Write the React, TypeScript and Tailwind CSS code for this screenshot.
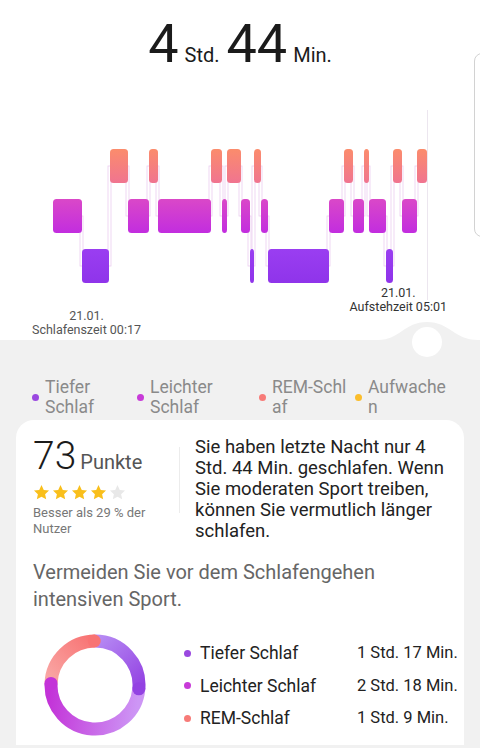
import React from "react";

type Lvl = "R" | "L" | "D";

const levelY: Record<Lvl, number> = { R: 149, L: 199, D: 249 };

// sleep phases: [start x, end x, level]
const phases: [number, number, Lvl][] = [
  [53, 82, "L"], [82, 109, "D"], [110, 128, "R"], [128, 149, "L"], [149, 158, "R"],
  [158, 211, "L"], [211, 222, "R"], [222, 227, "L"], [227, 241, "R"], [241, 250, "L"],
  [250, 254, "D"], [254, 261, "R"], [261, 268, "L"], [268, 329, "D"], [329, 344, "L"],
  [344, 353, "R"], [353, 364, "L"], [364, 369, "R"], [369, 386, "L"], [386, 393, "D"],
  [393, 402, "R"], [402, 417, "L"], [417, 427, "R"],
];

const SleepChart = () => (
  <svg width="480" height="200" viewBox="0 100 480 200" className="block">
    <defs>
      <linearGradient id="phase" gradientUnits="userSpaceOnUse" x1="0" y1="149" x2="0" y2="283">
        <stop offset="0" stopColor="#fb8c6c" />
        <stop offset="0.254" stopColor="#f07490" />
        <stop offset="0.373" stopColor="#da48c8" />
        <stop offset="0.627" stopColor="#c22ddf" />
        <stop offset="0.746" stopColor="#9a3ef1" />
        <stop offset="1" stopColor="#8f34ea" />
      </linearGradient>
    </defs>
    <line x1="427.5" y1="110" x2="427.5" y2="300" stroke="#ece6ef" strokeWidth="1" />
    {phases.slice(1).map(([x, , lvl], i) => {
      const prev = phases[i][2];
      const a = Math.min(levelY[prev], levelY[lvl]) + 17;
      const b = Math.max(levelY[prev], levelY[lvl]) + 17;
      return <rect key={"c" + i} x={x - 2} y={a} width="3" height={b - a} fill="#fff" stroke="#eccdf0" strokeWidth="0.8" />;
    })}
    {phases.map(([x1, x2, lvl], i) => (
      <rect key={i} x={x1} y={levelY[lvl]} width={x2 - x1} height="34" rx="3.5" fill="url(#phase)" />
    ))}
  </svg>
);

const Star = ({ on }: { on: boolean }) => (
  <svg width="17" height="17" viewBox="0 0 24 24">
    <path
      d="M12 1.5l3.2 6.8 7.4.9-5.5 5.1 1.5 7.3L12 17.9l-6.6 3.7 1.5-7.3-5.5-5.1 7.4-.9z"
      fill={on ? "#f9bf1b" : "#e8e8e8"}
    />
  </svg>
);

const polar = (deg: number, r = 44, cx = 51, cy = 51) => {
  const a = (deg * Math.PI) / 180;
  return [cx + r * Math.sin(a), cy - r * Math.cos(a)];
};

const arc = (from: number, to: number) => {
  const [x1, y1] = polar(from);
  const [x2, y2] = polar(to);
  const large = to - from > 180 ? 1 : 0;
  return `M ${x1} ${y1} A 44 44 0 ${large} 1 ${x2} ${y2}`;
};

const Donut = () => {
  const deepEnd = 95;
  const lightEnd = 272;
  const [dx, dy] = polar(deepEnd);
  const [lx, ly] = polar(lightEnd);
  const [rx, ry] = polar(359);
  return (
    <svg width="102" height="102" viewBox="0 0 102 102">
      <defs>
        <linearGradient id="deep" gradientUnits="userSpaceOnUse" x1="51" y1="7" x2="95" y2="55">
          <stop offset="0" stopColor="#b68af3" />
          <stop offset="1" stopColor="#9342e2" />
        </linearGradient>
        <linearGradient id="light" gradientUnits="userSpaceOnUse" x1="95" y1="60" x2="7" y2="48">
          <stop offset="0" stopColor="#cd96f5" />
          <stop offset="1" stopColor="#c333d8" />
        </linearGradient>
        <linearGradient id="rem" gradientUnits="userSpaceOnUse" x1="7" y1="50" x2="51" y2="7">
          <stop offset="0" stopColor="#f9a8a6" />
          <stop offset="1" stopColor="#f87373" />
        </linearGradient>
      </defs>
      <path d={arc(0, deepEnd)} fill="none" stroke="url(#deep)" strokeWidth="13" />
      <path d={arc(deepEnd, lightEnd)} fill="none" stroke="url(#light)" strokeWidth="13" />
      <path d={arc(lightEnd, 360)} fill="none" stroke="url(#rem)" strokeWidth="13" />
      <circle cx={dx} cy={dy} r="6.5" fill="#9342e2" />
      <circle cx={lx} cy={ly} r="6.5" fill="#c333d8" />
      <circle cx={rx} cy={ry} r="6.5" fill="#f87373" />
    </svg>
  );
};

const legend = [
  { color: "bg-[#9a48e0]", w: "w-[105px]", a: "Tiefer", b: "Schlaf" },
  { color: "bg-[#c83bd8]", w: "w-[122px]", a: "Leichter", b: "Schlaf" },
  { color: "bg-[#f77b78]", w: "w-[96px]", a: "REM-Schl", b: "af" },
  { color: "bg-[#fbbd2b]", w: "w-[100px]", a: "Aufwache", b: "n" },
];

const phaseRows = [
  { color: "bg-[#9a48e0]", name: "Tiefer Schlaf", time: "1 Std. 17 Min." },
  { color: "bg-[#c83bd8]", name: "Leichter Schlaf", time: "2 Std. 18 Min." },
  { color: "bg-[#f77b78]", name: "REM-Schlaf", time: "1 Std. 9 Min." },
];

export default function App() {
  return (
    <main className="relative w-[480px] h-[748px] overflow-hidden bg-white font-[Roboto,sans-serif]">
      {/* next page peeking in from the right */}
      <div className="absolute top-[53px] left-[474px] w-[20px] h-[184px] rounded-[8px] border border-[#d2d2d2]" />

      <section className="h-[340px]">
        <h1 className="pt-[17px] flex items-baseline justify-center gap-[6px] text-[#1b1b1b] leading-none">
          <span className="text-[54px]">4</span>
          <span className="text-[20px] mr-[1px]">Std.</span>
          <span className="text-[54px]">44</span>
          <span className="text-[20px]">Min.</span>
        </h1>
        <div className="mt-[29px]">
          <SleepChart />
        </div>
        <div className="-mt-[14px] flex justify-between pl-[32px] pr-[33px] text-[12.5px] leading-[14px] text-[#555]">
          <div className="mt-[23px] text-center">
            <div>21.01.</div>
            <div>Schlafenszeit 00:17</div>
          </div>
          <div className="text-center text-[#333]">
            <div>21.01.</div>
            <div>Aufstehzeit 05:01</div>
          </div>
        </div>
      </section>

      <section className="relative bg-[#f1f1f1] h-[408px]">
        <svg className="absolute -top-[20px] left-0" width="480" height="40" viewBox="0 320 480 40">
          <path d="M378 340 C400 340 404 322 427 322 C450 322 454 340 478 340 Z" fill="#f1f1f1" />
          <circle cx="427" cy="342" r="15" fill="#fff" />
        </svg>

        <ul className="relative flex pt-[37px] pl-[32px] text-[17.5px] leading-[20px] text-[#8a8a8a]">
          {legend.map((l) => (
            <li key={l.a} className={`flex items-center gap-[6px] ${l.w}`}>
              <span className={`w-[7px] h-[7px] rounded-full shrink-0 ${l.color}`} />
              <span>
                {l.a}
                <br />
                {l.b}
              </span>
            </li>
          ))}
        </ul>

        <article className="mt-[3px] mx-[16px] h-[325px] bg-white rounded-t-[18px] pt-[17px] pl-[17px]">
          <div className="flex items-start">
            <div className="w-[146px]">
              <div className="flex items-baseline gap-[4px] leading-none">
                <span className="text-[39px] font-light text-[#1b1b1b]">73</span>
                <span className="text-[20px] text-[#555]">Punkte</span>
              </div>
              <div className="mt-[8px] flex gap-[2px]">
                <Star on />
                <Star on />
                <Star on />
                <Star on />
                <Star on={false} />
              </div>
              <p className="mt-[4px] text-[13px] leading-[16px] text-[#777]">
                Besser als 29 % der
                <br />
                Nutzer
              </p>
            </div>
            <div className="mt-[10px] w-px h-[66px] bg-[#ececec]" />
            <p className="ml-[15px] w-[250px] text-[18.5px] leading-[21px] text-[#222]">
              Sie haben letzte Nacht nur 4 Std. 44 Min. geschlafen. Wenn Sie moderaten Sport treiben, können Sie vermutlich länger schlafen.
            </p>
          </div>

          <p className="mt-[17px] text-[20px] leading-[27px] text-[#666]">
            Vermeiden Sie vor dem Schlafengehen
            <br />
            intensiven Sport.
          </p>

          <div className="mt-[22px] flex items-start">
            <div className="ml-[11px] -mt-[1px]">
              <Donut />
            </div>
            <ul className="ml-[38px] mt-[2px] text-[17.5px] leading-[32.5px] text-[#222]">
              {phaseRows.map((r) => (
                <li key={r.name} className="flex items-center">
                  <span className={`w-[7px] h-[7px] rounded-full ${r.color}`} />
                  <span className="ml-[9px] w-[157px]">{r.name}</span>
                  <span className="text-[16.5px]">{r.time}</span>
                </li>
              ))}
            </ul>
          </div>
        </article>
      </section>
    </main>
  );
}
